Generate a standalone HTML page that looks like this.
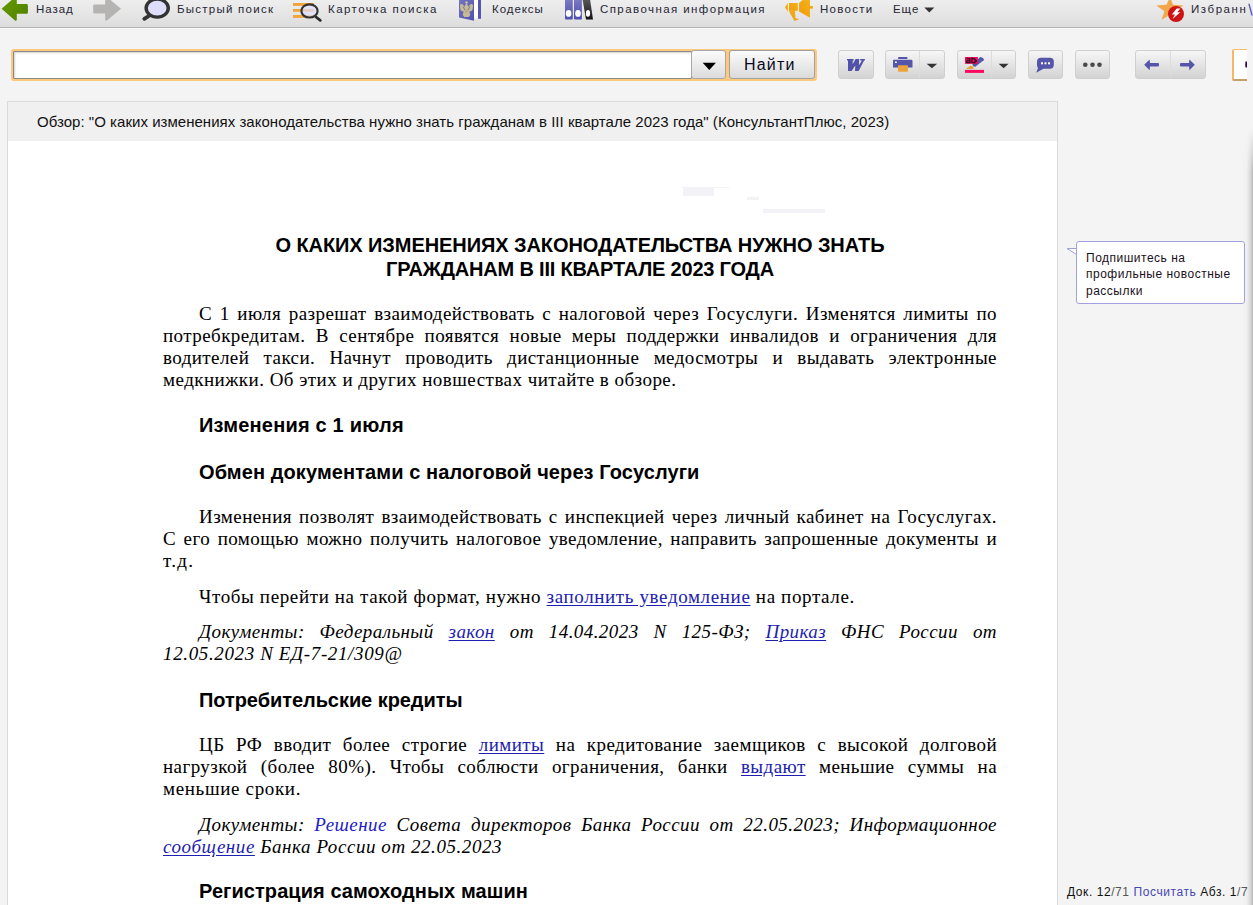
<!DOCTYPE html>
<html><head><meta charset="utf-8">
<style>
*{box-sizing:border-box}
html,body{margin:0;padding:0}
body{width:1253px;height:905px;overflow:hidden;position:relative;background:#f4f4f4;font-family:"Liberation Sans",sans-serif}
.abs{position:absolute}
#topbar{left:0;top:0;width:1253px;height:27px;background:linear-gradient(#eeeeee,#dddddd)}
#topline{left:0;top:27px;width:1253px;height:1px;background:#b3b3b3}
.tl{position:absolute;top:2px;font-size:11.5px;line-height:15px;color:#262634;white-space:nowrap}
.btn{position:absolute;top:50px;height:29px;border:1px solid #d0d0d0;border-radius:3px;background:linear-gradient(#f6f6f6,#d3d3d3)}
.div{position:absolute;top:0;width:1px;height:27px;background:#dcdcdc}
#doc{left:7px;top:101px;width:1051px;height:804px;border:1px solid #dadada;border-bottom:none;background:#fff}
#dochead{left:0;top:0;width:1049px;height:39px;background:#f0f0f0}
.hd{position:absolute;font-size:15px;line-height:18px;color:#111;white-space:nowrap}
.p{position:absolute;left:163px;width:834px;font-family:"Liberation Serif",serif;font-size:19px;line-height:22px;letter-spacing:0.43px;-webkit-text-stroke-width:0.05px;margin-top:1px;color:#000;white-space:nowrap}
.j{text-align:justify;text-align-last:justify}
.h{position:absolute;left:199px;font-size:20px;line-height:22px;font-weight:bold;color:#000;white-space:nowrap}
.i{font-style:italic;-webkit-text-stroke-width:0}
a{color:#1e1eb0;text-decoration:underline;text-underline-offset:2px}
.lk{color:#2020c8}
</style></head><body>
<!-- top bar -->
<div id="topbar" class="abs"></div>
<div id="topline" class="abs"></div>
<div class="abs" style="left:0;top:28px;width:1253px;height:1px;background:#f9f9f9"></div>

<!-- back arrow -->
<svg class="abs" style="left:0;top:0" width="30" height="24" viewBox="0 0 30 24">
<defs><linearGradient id="ga" x1="0" y1="0" x2="1" y2="1"><stop offset="0" stop-color="#689a00"/><stop offset="1" stop-color="#4f8000"/></linearGradient></defs>
<path d="M1.6,8.8 L16.8,-4.5 L16.8,4 L26.5,4 Q27.9,4 27.9,5.4 L27.9,12.4 Q27.9,13.8 26.5,13.8 L16.8,13.8 L16.8,20 Q16,21.2 15,20.5 Z" fill="url(#ga)"/>
</svg>
<div class="tl" style="left:36px;letter-spacing:0.96px">Назад</div>
<!-- forward arrow -->
<svg class="abs" style="left:90px;top:0" width="34" height="24" viewBox="90 0 34 24">
<path d="M121,8.8 L105.2,-4.5 L105.2,4.4 L94.5,4.4 Q93.2,4.4 93.2,5.7 L93.2,12.3 Q93.2,13.6 94.5,13.6 L105.2,13.6 L105.2,20 Q106,21.2 107,20.5 Z" fill="#b5b4b2"/>
</svg>
<!-- quick search magnifier -->
<svg class="abs" style="left:138px;top:0" width="36" height="24" viewBox="138 0 36 24">
<line x1="149.5" y1="15.5" x2="144.3" y2="18.8" stroke="#333" stroke-width="3.8" stroke-linecap="round"/>
<ellipse cx="157.2" cy="8.1" rx="11.1" ry="9" fill="#dedefc" stroke="#333" stroke-width="3.4"/>
</svg>
<div class="tl" style="left:177px;letter-spacing:1.25px">Быстрый поиск</div>
<!-- card search -->
<svg class="abs" style="left:290px;top:0" width="36" height="24" viewBox="290 0 36 24">
<rect x="293" y="3" width="21" height="2.9" fill="#f2a43c"/>
<rect x="293" y="9" width="21" height="2.8" fill="#f2a43c"/>
<rect x="293" y="15" width="21" height="2.9" fill="#f2a43c"/>
<line x1="316" y1="17" x2="320.3" y2="20.3" stroke="#2a2a2a" stroke-width="2.8" stroke-linecap="round"/>
<ellipse cx="309.5" cy="10.9" rx="8.1" ry="6.6" fill="rgba(222,222,255,0.7)" stroke="#333" stroke-width="2.2"/>
</svg>
<div class="tl" style="left:328px;letter-spacing:1.46px">Карточка поиска</div>
<!-- codex -->
<svg class="abs" style="left:455px;top:0" width="30" height="24" viewBox="455 0 30 24">
<defs><linearGradient id="gb" x1="0" y1="0" x2="1" y2="1"><stop offset="0" stop-color="#7676c0"/><stop offset="1" stop-color="#5050b0"/></linearGradient></defs>
<path d="M459,-1 L474,-1 L474,20.7 L459,17.5 Z" fill="url(#gb)"/>
<rect x="474" y="-1" width="4" height="19.5" fill="#fff"/>
<rect x="478" y="-1" width="3" height="19.8" fill="#5656b2"/>
<path d="M460,5.5 Q460.5,3.6 462.5,4.3 L464.8,6.8 L465.5,4.5 L466.5,3.2 L467.5,4.5 L468.2,6.8 L470.5,4.3 Q472.5,3.6 473,5.5 L472.6,9.5 Q471.6,11.8 469.3,11.6 L470.3,14.8 L468.8,17 L464.2,17 L462.7,14.8 L463.7,11.6 Q461.4,11.8 460.4,9.5 Z" fill="#d2c592" opacity="0.9"/>
<circle cx="466.5" cy="2.4" r="1.2" fill="#d6c894"/>
<path d="M463.2,6.5 L464.8,10 M469.8,6.5 L468.2,10" stroke="#7070bb" stroke-width="0.9"/>
<rect x="465.3" y="9.5" width="2.4" height="3" fill="#b8a878"/>
</svg>
<div class="tl" style="left:492px;letter-spacing:0.95px">Кодексы</div>
<!-- binders -->
<svg class="abs" style="left:560px;top:0" width="40" height="24" viewBox="560 0 40 24">
<defs><linearGradient id="gc" x1="0" y1="0" x2="0" y2="1"><stop offset="0" stop-color="#7c7cc4"/><stop offset="1" stop-color="#4e4eb0"/></linearGradient>
<linearGradient id="gd" x1="0" y1="0" x2="0" y2="1"><stop offset="0" stop-color="#5a5a5a"/><stop offset="1" stop-color="#111"/></linearGradient></defs>
<rect x="565" y="-2" width="7.8" height="21.6" rx="1" fill="url(#gc)"/>
<rect x="574" y="-2" width="7.9" height="21.6" rx="1" fill="url(#gc)"/>
<path d="M582.5,-1 L590,-1 L593,19.6 L586,19.6 Z" fill="url(#gd)"/>
<ellipse cx="568.6" cy="13.4" rx="2.8" ry="3.4" fill="#fff"/>
<ellipse cx="578" cy="13.4" rx="2.8" ry="3.4" fill="#fff"/>
<ellipse cx="588" cy="13.4" rx="2.1" ry="3.3" fill="#fff"/>
</svg>
<div class="tl" style="left:600px;letter-spacing:1.42px">Справочная информация</div>
<!-- megaphone -->
<svg class="abs" style="left:780px;top:0" width="36" height="24" viewBox="780 0 36 24">
<defs><linearGradient id="ge" x1="0" y1="1" x2="1" y2="0"><stop offset="0" stop-color="#f09a08"/><stop offset="1" stop-color="#f4b21c"/></linearGradient></defs>
<g fill="url(#ge)">
<path d="M785,7.2 L787.8,3 L787.8,11.8 Z"/>
<rect x="789" y="3" width="8.8" height="7.8"/>
<path d="M789,10.8 L795,10.8 L795.3,18 L799,19.3 L794.5,21 L790.5,14 Z"/>
<path d="M799.1,2.9 L804,-1 L810,-1 L810,17.8 L799.1,11.5 Z"/>
<rect x="809.5" y="6" width="3.4" height="2.6"/>
</g>
</svg>
<div class="tl" style="left:820px;letter-spacing:1.28px">Новости</div>
<div class="tl" style="left:893px;letter-spacing:0.95px">Еще</div>
<svg class="abs" style="left:924px;top:7px" width="11" height="6" viewBox="0 0 11 6"><path d="M0.3,0.5 L10.3,0.5 L5.3,5.6 Z" fill="#333"/></svg>
<!-- favourites star -->
<svg class="abs" style="left:1150px;top:0" width="40" height="24" viewBox="1150 0 40 24">
<path d="M1170,-3 L1173,4.8 L1183.5,5.4 L1175.2,11 L1177.8,19.8 L1170,14.8 L1161.5,19.8 L1164.5,11.2 L1156.2,5.4 L1166.5,4.8 Z" fill="#f0a64a"/>
<circle cx="1176" cy="14" r="8" fill="#cc1414"/>
<path d="M1176.8,8.6 L1171.8,14.4 L1175,14.4 L1172.6,19 L1180.2,12.2 L1177.2,12.2 L1180.4,8.6 Z" fill="#fff"/>
</svg>
<div class="tl" style="left:1191px;letter-spacing:1.55px">Избранн</div>
<svg class="abs" style="left:1245px;top:3px" width="8" height="14" viewBox="0 0 8 14"><path d="M3.2,0.8 L4.6,0.8 L7.8,12.5 L6.4,12.5 Z" fill="#5656c0"/></svg>

<!-- search row -->
<div class="abs" style="left:11px;top:49px;width:806px;height:32px;border-radius:3px;background:#fcc87c"></div>
<div class="abs" style="left:13px;top:51px;width:679px;height:28px;background:#fff;border:1px solid #8a8a8a;border-radius:1px;box-shadow:inset 1px 1px 2px rgba(0,0,0,0.18)"></div>
<div class="abs" style="left:691px;top:50px;width:35px;height:29px;border:1px solid #a8a8a8;border-radius:3px;background:linear-gradient(#fbfbfb,#dcdcdc)"></div>
<svg class="abs" style="left:702px;top:62px" width="15" height="9" viewBox="0 0 15 9"><path d="M0.7,0.7 L13.9,0.7 L7.3,8 Z" fill="#000"/></svg>
<div class="abs" style="left:729px;top:50px;width:86px;height:29px;border:1px solid #a0a0a0;border-radius:3px;background:linear-gradient(#fbfbfb,#dadada)"></div>
<div class="abs" style="left:744px;top:56px;font-size:16px;line-height:17px;letter-spacing:1.2px;color:#0a0a1e;white-space:nowrap">Найти</div>

<!-- W -->
<div class="btn" style="left:838px;width:36px"></div>
<svg class="abs" style="left:838px;top:50px" width="36" height="30" viewBox="0 0 36 30">
<path d="M9,9 L15.6,9 L15.6,10.6 L14.8,10.6 L14.6,14.2 L17.6,9 L21.2,9 L20.9,15.2 L23.9,10.6 L22.2,10.6 L22.2,9 L26.9,9 L26.9,10.6 L26.1,10.6 L20.6,21 L17,21 L17.3,15.6 L13.6,21 L10,21 L10,10.6 L9,10.6 Z" fill="#5252aa"/>
</svg>
<!-- print -->
<div class="btn" style="left:885px;width:60px"><div class="div" style="left:33px"></div></div>
<svg class="abs" style="left:892px;top:56px" width="21" height="17" viewBox="0 0 21 17">
<rect x="6" y="1" width="9.5" height="2" rx="0.8" fill="#5555aa"/>
<path d="M1.7,3.8 L19.3,3.8 Q20.5,3.8 20.5,5 L20.5,11.5 L1,11.5 L1,5 Q1,3.8 1.7,3.8Z" fill="#5555aa"/>
<rect x="3" y="5.5" width="1.8" height="1.5" fill="#fff"/>
<rect x="6" y="9.3" width="10" height="6.4" rx="0.6" fill="#eca33c"/>
</svg>
<svg class="abs" style="left:926px;top:63px" width="12" height="6" viewBox="0 0 12 6"><path d="M0.6,0.8 L11.2,0.8 L5.9,5.3 Z" fill="#333"/></svg>
<!-- marker -->
<div class="btn" style="left:957px;width:59px"><div class="div" style="left:33px"></div></div>
<svg class="abs" style="left:957px;top:50px" width="30" height="30" viewBox="0 0 30 30">
<path d="M15.3,14.4 L23.2,6.9 L25.2,7.6 L27,9.3 L26.6,10.2 L18.3,16.7 L16.6,16.4 Z" fill="#5454aa"/>
<rect x="8" y="7" width="12.9" height="6.8" fill="#f00a5e"/>
<path d="M9.6,8.7 L12.3,8.7 Q12.9,8.7 12.9,9.4 L12.9,12.7 L10.4,12.7 Q9.7,12.7 9.7,11.9 L9.7,11.4 Q9.7,10.7 10.4,10.7 L12.9,10.7" stroke="#1a0a14" stroke-width="1.1" fill="none"/>
<path d="M14.9,7.2 L14.9,12.7 L17.4,12.7 Q18.1,12.7 18.1,12 L18.1,9.4 Q18.1,8.7 17.4,8.7 L14.9,8.7" stroke="#1a0a14" stroke-width="1.1" fill="none"/>
<circle cx="19.1" cy="11" r="0.9" fill="#1a0a14"/>
<path d="M9.2,18.9 Q10.5,17.6 11.5,17.2 L12.5,16.2 Q13.5,15.1 14.5,15.8 Q15.8,16.4 16.3,17.3 Q17,18.9 16.5,18.9 Z" fill="#e4a43a"/>
<rect x="8" y="19.9" width="19" height="3" fill="#ff0a5c"/>
</svg>
<svg class="abs" style="left:998px;top:63px" width="12" height="6" viewBox="0 0 12 6"><path d="M0.6,0.8 L10.6,0.8 L5.6,5.2 Z" fill="#333"/></svg>
<!-- comment -->
<div class="btn" style="left:1028px;width:35px"></div>
<svg class="abs" style="left:1035px;top:57px" width="20" height="17" viewBox="0 0 20 17">
<path d="M6,0.7 L15,0.7 Q18.8,0.7 18.8,4.5 L18.8,8 Q18.8,11.7 15,11.7 L8.5,11.7 L1.2,15.8 L3,11 Q2,9.8 2,8 L2,4.5 Q2,0.7 6,0.7 Z" fill="#5555aa"/>
<rect x="6" y="5.3" width="2" height="2" fill="#fff"/><rect x="9.5" y="5.3" width="2" height="2" fill="#fff"/><rect x="13" y="5.3" width="2" height="2" fill="#fff"/>
</svg>
<!-- more -->
<div class="btn" style="left:1075px;width:35px"></div>
<svg class="abs" style="left:1080px;top:60px" width="25" height="10" viewBox="0 0 25 10">
<circle cx="5.3" cy="4.8" r="2.3" fill="#4a4a4a"/><circle cx="12.5" cy="4.8" r="2.3" fill="#4a4a4a"/><circle cx="19.5" cy="4.8" r="2.3" fill="#4a4a4a"/>
</svg>
<!-- nav -->
<div class="btn" style="left:1135px;width:71px"><div class="div" style="left:34px"></div></div>
<svg class="abs" style="left:1143px;top:58px" width="18" height="14" viewBox="0 0 18 14">
<path d="M1.2,6.8 L6.6,1.6 L7,5 L15,5 Q16,5 16,6 L16,7.6 Q16,8.6 15,8.6 L7,8.6 L6.6,12.3 Z" fill="#5555aa"/>
</svg>
<svg class="abs" style="left:1178px;top:58px" width="18" height="14" viewBox="0 0 18 14">
<path d="M16.8,6.8 L11.4,1.6 L11,5 L3,5 Q2,5 2,6 L2,7.6 Q2,8.6 3,8.6 L11,8.6 L11.4,12.3 Z" fill="#5555aa"/>
</svg>
<!-- small input right -->
<div class="abs" style="left:1232px;top:49px;width:15px;height:32px;background:#fff;border-left:2px solid #f6b866;border-top:1px solid #f8bf70;border-bottom:2px solid #c4a06a;border-radius:2px 0 0 2px"></div>
<svg class="abs" style="left:1244px;top:60px" width="3" height="9" viewBox="0 0 3 9"><ellipse cx="2.2" cy="4.5" rx="1" ry="3.3" fill="#2a0a48"/></svg>
<!-- document -->
<div id="doc" class="abs">
 <div id="dochead" class="abs"></div>
 <div class="hd" style="left:29px;top:11px;letter-spacing:0.03px">Обзор: "О каких изменениях законодательства нужно знать гражданам в III квартале 2023 года" (КонсультантПлюс, 2023)</div>
</div>
<!-- faint artifacts -->
<div class="abs" style="left:683px;top:188px;width:31px;height:8px;background:#f3f3f7"></div>
<div class="abs" style="left:681px;top:187px;width:48px;height:1px;background:#f3f3f7"></div>
<div class="abs" style="left:763px;top:209px;width:62px;height:4px;background:#f3f3f7"></div>
<div class="abs" style="left:747px;top:197px;width:12px;height:3px;background:#f3f3f7"></div>

<!-- body text -->
<div class="h" style="left:163px;width:834px;text-align:center;top:234px;margin-top:0;letter-spacing:-0.08px">О КАКИХ ИЗМЕНЕНИЯХ ЗАКОНОДАТЕЛЬСТВА НУЖНО ЗНАТЬ</div>
<div class="h" style="left:163px;width:834px;text-align:center;top:258px;margin-top:0;letter-spacing:-0.19px">ГРАЖДАНАМ В III КВАРТАЛЕ 2023 ГОДА</div>

<div class="p j" style="top:302px;text-indent:36px">С 1 июля разрешат взаимодействовать с налоговой через Госуслуги. Изменятся лимиты по</div>
<div class="p j" style="top:324px">потребкредитам. В сентябре появятся новые меры поддержки инвалидов и ограничения для</div>
<div class="p j" style="top:346px">водителей такси. Начнут проводить дистанционные медосмотры и выдавать электронные</div>
<div class="p" style="top:368px;letter-spacing:0.47px">медкнижки. Об этих и других новшествах читайте в обзоре.</div>

<div class="h" style="top:414px;letter-spacing:0.2px">Изменения с 1 июля</div>
<div class="h" style="top:461px;letter-spacing:0.09px">Обмен документами с налоговой через Госуслуги</div>

<div class="p j" style="top:505px;text-indent:36px">Изменения позволят взаимодействовать с инспекцией через личный кабинет на Госуслугах.</div>
<div class="p j" style="top:527px">С его помощью можно получить налоговое уведомление, направить запрошенные документы и</div>
<div class="p" style="top:549px;letter-spacing:1.36px">т.д.</div>

<div class="p" style="top:585px;text-indent:36px;letter-spacing:0.63px">Чтобы перейти на такой формат, нужно <a>заполнить уведомление</a> на портале.</div>

<div class="p j i" style="top:620px;text-indent:36px">Документы: Федеральный <a>закон</a> от 14.04.2023 N 125-ФЗ; <a>Приказ</a> ФНС России от</div>
<div class="p i" style="top:642px;letter-spacing:0.63px">12.05.2023 N ЕД-7-21/309@</div>

<div class="h" style="top:689px;letter-spacing:-0.06px">Потребительские кредиты</div>

<div class="p j" style="top:733px;text-indent:36px">ЦБ РФ вводит более строгие <a>лимиты</a> на кредитование заемщиков с высокой долговой</div>
<div class="p j" style="top:755px">нагрузкой (более 80%). Чтобы соблюсти ограничения, банки <a>выдают</a> меньшие суммы на</div>
<div class="p" style="top:777px;letter-spacing:0.66px">меньшие сроки.</div>

<div class="p j i" style="top:813px;text-indent:36px">Документы: <span class="lk">Решение</span> Совета директоров Банка России от 22.05.2023; Информационное</div>
<div class="p i" style="top:835px;letter-spacing:0.56px"><a>сообщение</a> Банка России от 22.05.2023</div>

<div class="h" style="top:880px;letter-spacing:0.06px">Регистрация самоходных машин</div>

<!-- right pane -->
<div class="abs" style="left:1243px;top:128px;width:10px;height:777px;background:linear-gradient(90deg,rgba(0,0,0,0) 0%,rgba(0,0,0,0.02) 40%,rgba(0,0,0,0.12) 75%,rgba(0,0,0,0.22) 95%,rgba(0,0,0,0.2) 100%);-webkit-mask-image:linear-gradient(rgba(0,0,0,0),#000 45px)"></div>
<svg class="abs" style="left:1066px;top:244px" width="12" height="12" viewBox="0 0 12 12"><path d="M1,4.5 L10.5,4.5 L10.5,10.5 Z" fill="#fff" stroke="#a0a0e0" stroke-width="1"/></svg>
<div class="abs" style="left:1076px;top:241px;width:169px;height:63px;background:#fff;border:1px solid #a2a2e2;border-radius:3px"></div>
<div class="abs" style="left:1077px;top:245px;width:1px;height:10px;background:#fff"></div>
<div class="abs" style="left:1086px;top:250px;font-size:12px;line-height:16.3px;letter-spacing:0.5px;color:#1a1020;white-space:nowrap">Подпишитесь на<br>профильные новостные<br>рассылки</div>

<div class="abs" style="left:1067px;top:885px;font-size:12px;line-height:15px;letter-spacing:0.57px;color:#111;white-space:nowrap">Док. 12<span style="color:#555">/71</span> <span style="color:#4646b4">Посчитать</span> Абз. 1<span style="color:#555">/7</span></div>
</body></html>
